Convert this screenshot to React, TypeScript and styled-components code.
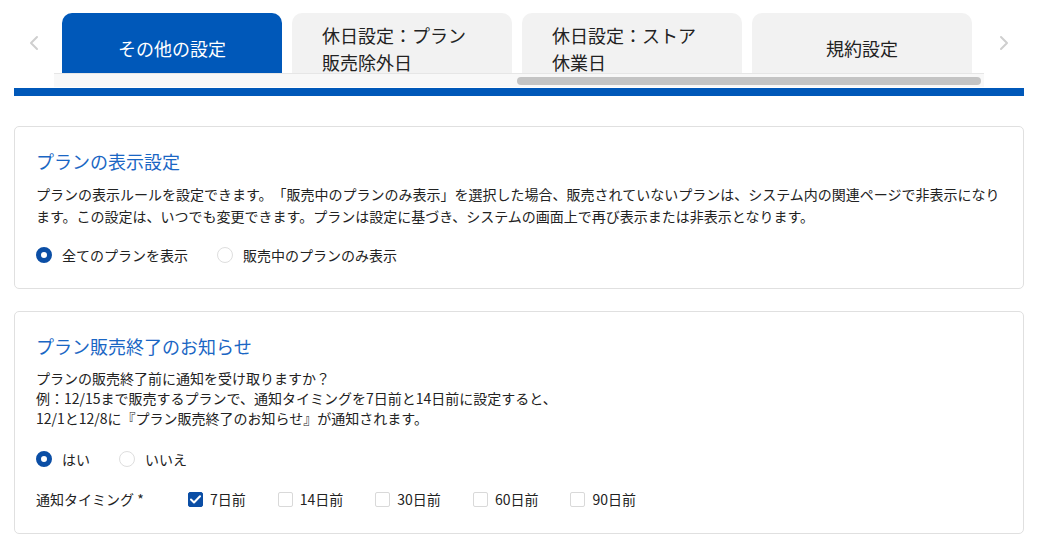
import React from "react";
import styled, { createGlobalStyle } from "styled-components";
import { ChevronLeft, ChevronRight } from "lucide-react";

const GlobalStyle = createGlobalStyle`
  html, body { margin: 0; padding: 0; background: #fff; }
  body {
    font-family: "Noto Sans CJK JP", "Noto Sans", sans-serif;
    color: #222;
    text-spacing-trim: space-all;
  }
  * { box-sizing: border-box; }
`;

const Page = styled.div`
  padding: 13px 14px 16px;
`;

const TabNav = styled.div`
  display: flex;
  align-items: stretch;
`;

const ArrowButton = styled.button`
  width: 40px;
  flex: 0 0 40px;
  border: none;
  background: transparent;
  padding: 0 0 14px;
  display: flex;
  align-items: center;
  justify-content: center;
  color: #cfcfcf;
  cursor: pointer;
`;

const ScrollArea = styled.div`
  flex: 1;
  display: flex;
  flex-direction: column;
  overflow: hidden;
`;

const TabStrip = styled.div`
  display: flex;
  gap: 10px;
  padding-left: 8px;
  height: 60px;
`;

const Tab = styled.div<{ $active?: boolean }>`
  flex: 0 0 220px;
  height: 60px;
  padding: 11px 30px 0;
  border-radius: 10px 10px 0 0;
  display: flex;
  align-items: center;
  justify-content: center;
  font-size: 18px;
  line-height: 27px;
  background: ${(p) => (p.$active ? "#0058b9" : "#f2f2f2")};
  color: ${(p) => (p.$active ? "#fff" : "#222")};
  overflow: hidden;
`;

const ScrollTrack = styled.div`
  height: 14px;
  background: #f8f8f8;
  border-top: 1px solid #e6e6e6;
  padding: 3px 3px 0 0;
  display: flex;
  justify-content: flex-end;
`;

const ScrollThumb = styled.div`
  width: 464px;
  height: 8px;
  border-radius: 4px;
  background: #c4c4c4;
`;

const BlueBar = styled.div`
  height: 8px;
  margin-top: 1px;
  background: #0058b9;
`;

const Cards = styled.div`
  margin-top: 30px;
  display: flex;
  flex-direction: column;
  gap: 22px;
`;

const Card = styled.section<{ $pb: number }>`
  border: 1px solid #e0e0e0;
  border-radius: 5px;
  padding: 21px 21px ${(p) => p.$pb}px;
`;

const CardTitle = styled.h2`
  margin: 0;
  font-size: 18px;
  line-height: 26px;
  font-weight: 400;
  color: #1a66c4;
`;

const Description = styled.p<{ $lh: number }>`
  margin: 9px 0 0;
  font-size: 14px;
  line-height: ${(p) => p.$lh}px;
  color: #222;
`;

const OptionRow = styled.div<{ $mt: number }>`
  display: flex;
  align-items: center;
  height: 20px;
  margin-top: ${(p) => p.$mt}px;
  font-size: 14px;
`;

const RadioItem = styled.label`
  display: flex;
  align-items: center;
  gap: 10px;
  margin-right: 29px;
  cursor: pointer;
`;

const RadioCircle = styled.span<{ $checked?: boolean }>`
  width: 16px;
  height: 16px;
  border-radius: 50%;
  background: #fff;
  border: ${(p) => (p.$checked ? "5px solid #0b4ea5" : "1px solid #dedede")};
  flex: 0 0 16px;
`;

const FieldLabel = styled.span`
  width: 152px;
  flex: 0 0 152px;
`;

const CheckItem = styled.label`
  display: flex;
  align-items: center;
  gap: 7px;
  margin-right: 32px;
  cursor: pointer;
`;

const CheckBox = styled.span<{ $checked?: boolean }>`
  width: 15px;
  height: 15px;
  flex: 0 0 15px;
  border-radius: 2px;
  display: flex;
  align-items: center;
  justify-content: center;
  background: ${(p) => (p.$checked ? "#0b4ea5" : "#fff")};
  border: 1px solid ${(p) => (p.$checked ? "#0b4ea5" : "#d9d9d9")};
`;

const tabs = [
  { label: "その他の設定", active: true },
  { label: "休日設定：プラン販売除外日" },
  { label: "休日設定：ストア休業日" },
  { label: "規約設定" },
];

const timings = [
  { label: "7日前", checked: true },
  { label: "14日前" },
  { label: "30日前" },
  { label: "60日前" },
  { label: "90日前" },
];

function Radio({ checked, label }: { checked?: boolean; label: string }) {
  return (
    <RadioItem>
      <RadioCircle $checked={checked} />
      <span>{label}</span>
    </RadioItem>
  );
}

export default function App() {
  return (
    <>
      <GlobalStyle />
      <Page>
        <TabNav>
          <ArrowButton aria-label="前へ">
            <ChevronLeft size={24} strokeWidth={2} />
          </ArrowButton>
          <ScrollArea>
            <TabStrip>
              {tabs.map((t) => (
                <Tab key={t.label} $active={t.active}>
                  <span>{t.label}</span>
                </Tab>
              ))}
            </TabStrip>
            <ScrollTrack>
              <ScrollThumb />
            </ScrollTrack>
          </ScrollArea>
          <ArrowButton aria-label="次へ">
            <ChevronRight size={24} strokeWidth={2} />
          </ArrowButton>
        </TabNav>
        <BlueBar />
        <Cards>
          <Card $pb={23}>
            <CardTitle>プランの表示設定</CardTitle>
            <Description $lh={22}>
              プランの表示ルールを設定できます。「販売中のプランのみ表示」を選択した場合、販売されていないプランは、システム内の関連ページで非表示になります。この設定は、いつでも変更できます。プランは設定に基づき、システムの画面上で再び表示または非表示となります。
            </Description>
            <OptionRow $mt={18}>
              <Radio checked label="全てのプランを表示" />
              <Radio label="販売中のプランのみ表示" />
            </OptionRow>
          </Card>
          <Card $pb={24}>
            <CardTitle>プラン販売終了のお知らせ</CardTitle>
            <Description $lh={20}>
              プランの販売終了前に通知を受け取りますか？
              <br />
              例：12/15まで販売するプランで、通知タイミングを7日前と14日前に設定すると、
              <br />
              12/1と12/8に『プラン販売終了のお知らせ』が通知されます。
            </Description>
            <OptionRow $mt={21}>
              <Radio checked label="はい" />
              <Radio label="いいえ" />
            </OptionRow>
            <OptionRow $mt={20}>
              <FieldLabel>通知タイミング *</FieldLabel>
              {timings.map((t) => (
                <CheckItem key={t.label}>
                  <CheckBox $checked={t.checked}>
                    {t.checked && (
                      <svg width="11" height="9" viewBox="0 0 11 9" fill="none">
                        <path
                          d="M1 4.5L4 7.5L10 1.2"
                          stroke="#fff"
                          strokeWidth="2"
                          strokeLinecap="round"
                          strokeLinejoin="round"
                        />
                      </svg>
                    )}
                  </CheckBox>
                  <span>{t.label}</span>
                </CheckItem>
              ))}
            </OptionRow>
          </Card>
        </Cards>
      </Page>
    </>
  );
}
